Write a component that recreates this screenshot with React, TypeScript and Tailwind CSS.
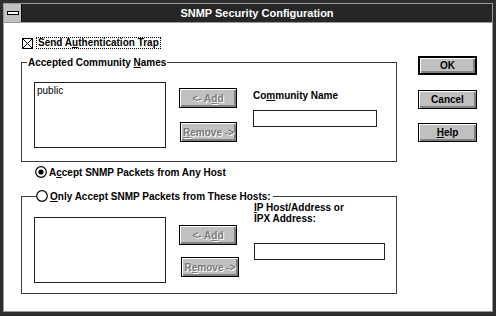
import React from "react";

const U = ({ children }: { children: React.ReactNode }) => (
  <span className="underline underline-offset-[1px] decoration-1">{children}</span>
);

function Btn({
  children,
  disabled,
  def,
  className = "",
}: {
  children: React.ReactNode;
  disabled?: boolean;
  def?: boolean;
  className?: string;
}) {
  return (
    <div
      className={`flex items-center justify-center bg-[#c0c0c0] ${
        def ? "border-2" : "border"
      } border-black shadow-[inset_1px_1px_0_#ffffff,inset_-1px_-1px_0_#808080,inset_-2px_-2px_0_#808080] ${
        disabled ? "text-[#7a7a7a] [text-shadow:1px_1px_0_#ffffff]" : "text-black"
      } ${className}`}
    >
      {children}
    </div>
  );
}

function Radio({ checked }: { checked?: boolean }) {
  return (
    <svg width="12" height="12" viewBox="0 0 12 12" className="shrink-0 bg-white">
      <circle cx="6" cy="6" r="5.3" fill="white" stroke="#000" strokeWidth="1.2" />
      {checked && <circle cx="6" cy="6" r="2.6" fill="#000" />}
    </svg>
  );
}

export default function App() {
  return (
    <div className="w-[500px] h-[321px] bg-white font-['Liberation_Sans',Arial,sans-serif] font-bold text-[10px] leading-[11px] text-black">
      <div className="w-[496px] h-[316px] bg-[#2e2e2e] pt-[3px] pl-[3px] pr-[3px] pb-[4px] flex flex-col">
        <div className="flex-1 flex flex-col bg-white border border-[#9a9a9a]">
          {/* Title bar */}
          <div className="h-[19px] flex bg-[#262626] border-b border-[#9a9a9a]">
            <div className="w-[18px] h-full bg-[#c0c0c0] border-r border-black flex items-center justify-center">
              <div className="w-[12px] h-[4px] bg-white border border-black" />
            </div>
            <div className="flex-1 flex items-center justify-center text-white text-[11px] leading-[12px] pb-[1px]">
              SNMP Security Configuration
            </div>
          </div>

          {/* Body */}
          <div className="flex pl-[17px]">
            {/* Left column */}
            <div className="w-[376px] flex flex-col">
              <div className="mt-[14px] flex items-center h-[12px]">
                <svg width="11" height="11" viewBox="0 0 11 11" className="shrink-0 ml-[1px]">
                  <rect x="0.5" y="0.5" width="10" height="10" fill="white" stroke="#000" />
                  <line x1="1" y1="1" x2="10" y2="10" stroke="#000" />
                  <line x1="10" y1="1" x2="1" y2="10" stroke="#000" />
                </svg>
                <span className="ml-[3px] px-[1px] border border-dotted border-black leading-[10px]">
                  Send A<U>u</U>thentication Trap
                </span>
              </div>

              {/* Group 1 */}
              <fieldset className="mt-[8px] border border-[#3c3c3c] h-[105px] pl-[12px]">
                <legend className="-ml-[7px] px-[1px] leading-[11px]">
                  Accepted Community <U>N</U>ames
                </legend>
                <div className="flex items-start mt-[14px]">
                  <div className="w-[132px] h-[66px] border border-[#222] pl-[2px] pt-[2px] font-normal">
                    public
                  </div>
                  <div className="ml-[13px] flex flex-col">
                    <Btn disabled className="w-[58px] h-[20px] mt-[6px]">
                      &lt;- A<U>d</U>d
                    </Btn>
                    <Btn disabled className="w-[57px] h-[20px] mt-[14px] ml-[1px]">
                      <U>R</U>emove -&gt;
                    </Btn>
                  </div>
                  <div className="ml-[16px] flex flex-col">
                    <div className="mt-[8px]">
                      Co<U>m</U>munity Name
                    </div>
                    <div className="mt-[9px] w-[124px] h-[17px] border border-[#222] bg-white" />
                  </div>
                </div>
              </fieldset>

              <div className="mt-[4px] ml-[14px] flex items-center h-[12px]">
                <Radio checked />
                <span className="ml-[2px]">
                  A<U>c</U>cept SNMP Packets from Any Host
                </span>
              </div>

              {/* Group 2 */}
              <fieldset className="mt-[12px] border border-[#3c3c3c] h-[104px] pl-[12px]">
                <legend className="ml-[2px] flex items-center leading-[11px] pr-[2px]">
                  <Radio />
                  <span className="ml-[2px]">
                    <U>O</U>nly Accept SNMP Packets from These Hosts:
                  </span>
                </legend>
                <div className="flex items-start mt-[15px]">
                  <div className="w-[132px] h-[66px] border border-[#222]" />
                  <div className="ml-[13px] flex flex-col">
                    <Btn disabled className="w-[58px] h-[20px] mt-[8px]">
                      &lt;- A<U>d</U>d
                    </Btn>
                    <Btn disabled className="w-[58px] h-[20px] mt-[12px] ml-[2px]">
                      R<U>e</U>move -&gt;
                    </Btn>
                  </div>
                  <div className="ml-[15px] flex flex-col">
                    <div className="-mt-[15px] leading-[11px]">
                      <U>I</U>P Host/Address or
                      <br />
                      IPX Address:
                    </div>
                    <div className="mt-[19px] w-[131px] h-[17px] border border-[#222] bg-white" />
                  </div>
                </div>
              </fieldset>
            </div>

            {/* Right column */}
            <div className="ml-[21px] flex flex-col pt-[33px]">
              <Btn def className="w-[59px] h-[19px]">
                OK
              </Btn>
              <Btn className="w-[59px] h-[19px] mt-[15px]">Cancel</Btn>
              <Btn className="w-[59px] h-[19px] mt-[14px]">
                <U>H</U>elp
              </Btn>
            </div>
          </div>
        </div>
      </div>
    </div>
  );
}
